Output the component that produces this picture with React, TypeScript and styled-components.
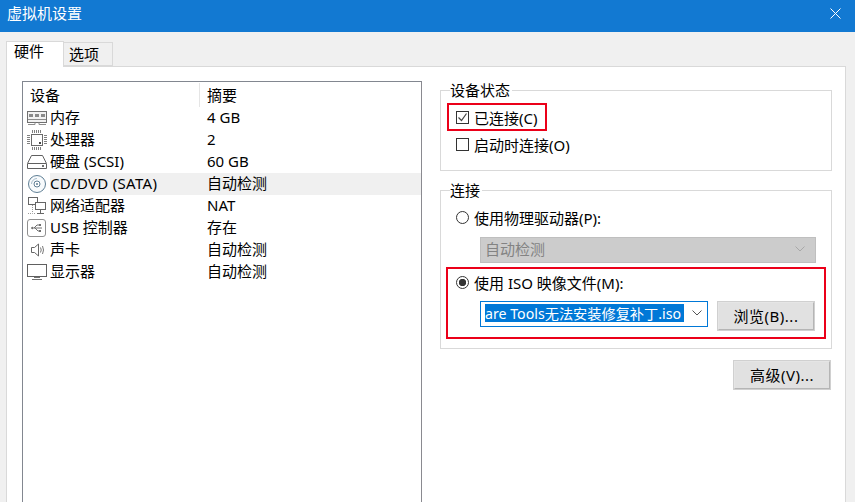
import React from 'react';
import styled, {createGlobalStyle} from "styled-components";

const GlobalStyle = createGlobalStyle`
  html, body {
    margin: 0;
    padding: 0;
    background: #f0f0f0;
  }
  body {
    font-family: "Noto Sans", "Noto Sans CJK SC", sans-serif;
    font-size: 15px;
    color: #000;
  }
`

const MemoryIcon = () => (
    <svg width="20" height="16" viewBox="0 0 20 16">
        <rect x="0.5" y="1.5" width="19" height="11" fill="#f2f2f2" stroke="#707070"/>
        <rect x="2" y="4" width="4" height="3" fill="#8a8a8a"/>
        <rect x="8" y="4" width="4" height="3" fill="#8a8a8a"/>
        <rect x="14" y="4" width="4" height="3" fill="#8a8a8a"/>
        <path d="M1 9.5H19M1 14.5H8V12.5M12 12.5V14.5H19" fill="none" stroke="#8c8c8c"/>
    </svg>
);

const CpuIcon = () => (
    <svg width="20" height="20" viewBox="0 0 20 20">
        <rect x="4.5" y="4.5" width="11" height="11" fill="#fff" stroke="#6a6a6a"/>
        <rect x="12" y="12" width="2" height="2" fill="#444"/>
        <path d="M5.5 0V3M7.5 0V3M9.5 0V3M11.5 0V3M13.5 0V3M5.5 17V20M7.5 17V20M9.5 17V20M11.5 17V20M13.5 17V20M0 5.5H3M0 7.5H3M0 9.5H3M0 11.5H3M0 13.5H3M17 5.5H20M17 7.5H20M17 9.5H20M17 11.5H20M17 13.5H20" stroke="#808080" strokeWidth="1"/>
    </svg>
);

const DiskIcon = () => (
    <svg width="20" height="16" viewBox="0 0 20 16">
        <path d="M4.5 1.5H15.5L19.5 9.5V14.5H0.5V9.5Z" fill="#fff" stroke="#606060"/>
        <path d="M1 9.5H19" stroke="#606060"/>
        <rect x="15" y="11" width="2" height="2" fill="#707070"/>
    </svg>
);

const DiscIcon = () => (
    <svg width="20" height="20" viewBox="0 0 20 20">
        <circle cx="10" cy="10" r="8.5" fill="#f7fafc" stroke="#5f7f95"/>
        <circle cx="10" cy="10" r="3" fill="#fff" stroke="#5f7f95"/>
        <circle cx="10" cy="10" r="1" fill="#5f7f95"/>
        <path d="M4.5 10A5.5 5.5 0 0 1 10 4.5" fill="none" stroke="#a8bdcb"/>
    </svg>
);

const NetworkIcon = () => (
    <svg width="20" height="20" viewBox="0 0 20 20">
        <rect x="1.5" y="1.5" width="9" height="7" fill="#fff" stroke="#666"/>
        <rect x="8.5" y="6.5" width="10" height="7" fill="#fff" stroke="#666"/>
        <path d="M13.5 14V17M10 17.5H17" stroke="#666"/>
        <path d="M5.5 9V17.5H9" fill="none" stroke="#999" strokeDasharray="1 1"/>
        <path d="M1 17.5H5" stroke="#999" strokeDasharray="1 1"/>
    </svg>
);

const UsbIcon = () => (
    <svg width="20" height="20" viewBox="0 0 20 20">
        <rect x="0.5" y="1.5" width="18" height="17" rx="2.5" fill="#fff" stroke="#909090"/>
        <path d="M4 10H15M7 10L10 7H12M8 10L11 13H12" fill="none" stroke="#707070"/>
        <path d="M4 10L6 8.5V11.5Z" fill="#707070"/>
        <rect x="12" y="6" width="2" height="2" fill="#707070"/>
        <rect x="12" y="12" width="2" height="2" fill="#707070"/>
    </svg>
);

const SoundIcon = () => (
    <svg width="20" height="16" viewBox="0 0 20 16">
        <path d="M4.5 5.5H7.5L11.5 2V14L7.5 10.5H4.5Z" fill="#fff" stroke="#666"/>
        <path d="M13.5 5.5Q15 8 13.5 10.5M15.5 4Q17.5 8 15.5 12" fill="none" stroke="#777"/>
    </svg>
);

const DisplayIcon = () => (
    <svg width="20" height="18" viewBox="0 0 20 18">
        <rect x="0.5" y="1.5" width="19" height="12" fill="#fff" stroke="#606060"/>
        <path d="M7 14.5H13M5 16.5H15" stroke="#707070"/>
    </svg>
);

const devices = [
    {name: "内存", summary: "4 GB", icon: <MemoryIcon/>},
    {name: "处理器", summary: "2", icon: <CpuIcon/>},
    {name: "硬盘 (SCSI)", summary: "60 GB", icon: <DiskIcon/>},
    {name: "CD/DVD (SATA)", summary: "自动检测", icon: <DiscIcon/>, selected: true},
    {name: "网络适配器", summary: "NAT", icon: <NetworkIcon/>},
    {name: "USB 控制器", summary: "存在", icon: <UsbIcon/>},
    {name: "声卡", summary: "自动检测", icon: <SoundIcon/>},
    {name: "显示器", summary: "自动检测", icon: <DisplayIcon/>},
];

const Chevron = ({color}: { color: string }) => (
    <svg width="10" height="6" viewBox="0 0 10 6">
        <path d="M0.5 0.5L5 5L9.5 0.5" fill="none" stroke={color}/>
    </svg>
);

export default function App() {
    return (
        <Window>
            <GlobalStyle/>
            <TitleBar>
                <Title>虚拟机设置</Title>
                <svg width="11" height="11" viewBox="0 0 11 11">
                    <path d="M0.5 0.5L10.5 10.5M10.5 0.5L0.5 10.5" stroke="#fff" strokeWidth="1"/>
                </svg>
            </TitleBar>
            <TabStrip>
                <Tab $active>硬件</Tab>
                <Tab>选项</Tab>
            </TabStrip>
            <Panel>
                <DeviceList>
                    <HeaderRow>
                        <HeaderName>设备</HeaderName>
                        <HeaderSummary>摘要</HeaderSummary>
                    </HeaderRow>
                    {devices.map(d => (
                        <DeviceRow key={d.name}>
                            <IconSlot>{d.icon}</IconSlot>
                            <DeviceName $selected={d.selected}>{d.name}</DeviceName>
                            <DeviceSummary $selected={d.selected}>{d.summary}</DeviceSummary>
                        </DeviceRow>
                    ))}
                </DeviceList>
                <Side>
                    <StatusGroup>
                        <Legend>设备状态</Legend>
                        <HighlightConnected>
                            <CheckBox $checked>
                                <svg width="11" height="11" viewBox="0 0 11 11">
                                    <path d="M1.5 5.5L4.5 8.5L9.5 1.5" fill="none" stroke="#444" strokeWidth="1.2"/>
                                </svg>
                            </CheckBox>
                            <span>已连接(C)</span>
                        </HighlightConnected>
                        <StartupRow>
                            <CheckBox/>
                            <span>启动时连接(O)</span>
                        </StartupRow>
                    </StatusGroup>
                    <ConnectGroup>
                        <Legend>连接</Legend>
                        <PhysicalRow>
                            <Radio/>
                            <span>使用物理驱动器(P):</span>
                        </PhysicalRow>
                        <DisabledSelect>
                            <span>自动检测</span>
                            <Chevron color="#a8a8a8"/>
                        </DisabledSelect>
                        <HighlightIso>
                            <IsoRow>
                                <Radio $checked/>
                                <span>使用 ISO 映像文件(M):</span>
                            </IsoRow>
                            <IsoControls>
                                <IsoCombo>
                                    <Selection>are Tools无法安装修复补丁.iso</Selection>
                                    <Chevron color="#555"/>
                                </IsoCombo>
                                <BrowseButton>浏览(B)...</BrowseButton>
                            </IsoControls>
                        </HighlightIso>
                    </ConnectGroup>
                    <ButtonRow>
                        <PlainButton>高级(V)...</PlainButton>
                    </ButtonRow>
                </Side>
            </Panel>
        </Window>
    );
}

const Window = styled.div`
  width: 855px;
  height: 502px;
  overflow: hidden;
  display: flex;
  flex-direction: column;
  background: #f0f0f0;
`

const TitleBar = styled.div`
  height: 32px;
  box-sizing: border-box;
  flex: none;
  display: flex;
  align-items: center;
  justify-content: space-between;
  padding: 0 14px 6px 7px;
  background: #1279d2;
  color: #fff;
`

const Title = styled.div`
  line-height: 26px;
  height: 26px;
`

const TabStrip = styled.div`
  flex: none;
  height: 34px;
  padding-left: 6px;
  display: flex;
  align-items: flex-end;
  position: relative;
  z-index: 1;
`

const Tab = styled.div<{ $active?: boolean }>`
  box-sizing: border-box;
  height: ${p => p.$active ? 26 : 24}px;
  width: ${p => p.$active ? 58 : 50}px;
  margin-left: ${p => p.$active ? 0 : -1}px;
  margin-bottom: ${p => p.$active ? -1 : 0}px;
  padding-left: ${p => p.$active ? 7 : 5}px;
  line-height: ${p => p.$active ? 19 : 22}px;
  background: ${p => p.$active ? "#fff" : "#f0f0f0"};
  border: 1px solid #d9d9d9;
  border-bottom: ${p => p.$active ? "none" : "1px solid #d9d9d9"};
`

const Panel = styled.div`
  flex: 1;
  box-sizing: border-box;
  width: 840px;
  margin-left: 6px;
  padding: 14px 13px 0 15px;
  display: flex;
  align-items: flex-start;
  background: #fff;
  border: 1px solid #d9d9d9;
  border-bottom: none;
`

const DeviceList = styled.div`
  box-sizing: border-box;
  width: 400px;
  height: 460px;
  flex: none;
  border: 1px solid #828790;
  border-right-color: #8a8a90;
`

const HeaderRow = styled.div`
  height: 24px;
  margin-top: 1px;
  display: flex;
  align-items: center;
`

const HeaderName = styled.div`
  width: 177px;
  box-sizing: border-box;
  padding-left: 7px;
  height: 24px;
  line-height: 24px;
  border-right: 1px solid #e5e5e5;
`

const HeaderSummary = styled.div`
  padding-left: 7px;
  line-height: 24px;
  height: 24px;
`

const DeviceRow = styled.div`
  height: 22px;
  display: flex;
  align-items: center;
  white-space: nowrap;
`

const IconSlot = styled.div`
  width: 27px;
  padding-left: 4px;
  box-sizing: border-box;
  flex: none;
  height: 22px;
  display: flex;
  align-items: center;
`

const DeviceName = styled.div<{ $selected?: boolean }>`
  width: 151px;
  height: 22px;
  line-height: 20px;
  box-sizing: border-box;
  letter-spacing: ${p => p.$selected ? 0.3 : 0}px;
  background: ${p => p.$selected ? "#f0f0f0" : "transparent"};
`

const DeviceSummary = styled.div<{ $selected?: boolean }>`
  flex: 1;
  height: 22px;
  line-height: 20px;
  padding-left: 6px;
  background: ${p => p.$selected ? "#f0f0f0" : "transparent"};
`

const Side = styled.div`
  width: 392px;
  margin-left: 18px;
  padding-top: 9px;
  flex: none;
`

const Group = styled.div`
  position: relative;
  box-sizing: border-box;
  border: 1px solid #d9d9d9;
`

const StatusGroup = styled(Group)`
  height: 81px;
  padding: 12px 0 0 6px;
`

const ConnectGroup = styled(Group)`
  height: 159px;
  margin-top: 19px;
  padding: 14px 0 0 5px;
`

const Legend = styled.div`
  position: absolute;
  top: -10px;
  left: 9px;
  padding: 0 2px 0 0;
  line-height: 18px;
  background: #fff;
`

const OptionRow = styled.div`
  display: flex;
  align-items: center;
  gap: 5px;
  white-space: nowrap;
`

const HighlightConnected = styled(OptionRow)`
  box-sizing: border-box;
  width: 100px;
  height: 28px;
  padding-left: 7px;
  border: 2px solid #eb0019;
`

const StartupRow = styled(OptionRow)`
  height: 26px;
  padding-left: 9px;
`

const PhysicalRow = styled(OptionRow)`
  height: 24px;
  padding-left: 10px;
`

const CheckBox = styled.span<{ $checked?: boolean }>`
  box-sizing: border-box;
  width: 13px;
  height: 13px;
  flex: none;
  display: flex;
  align-items: center;
  justify-content: center;
  border: 1px solid #333;
  background: #fff;
`

const Radio = styled.span<{ $checked?: boolean }>`
  box-sizing: border-box;
  width: 13px;
  height: 13px;
  flex: none;
  border-radius: 50%;
  border: 1px solid #333;
  background: ${p => p.$checked ? "radial-gradient(circle, #333 0, #333 3.4px, #fff 4px)" : "#fff"};
`

const DisabledSelect = styled.div`
  box-sizing: border-box;
  width: 336px;
  height: 26px;
  margin: 8px 0 0 34px;
  padding: 0 10px 3px 4px;
  display: flex;
  align-items: center;
  justify-content: space-between;
  background: #cccccc;
  border: 1px solid #bfbfbf;
  color: #838383;
`

const HighlightIso = styled.div`
  box-sizing: border-box;
  width: 380px;
  height: 72px;
  margin-top: 4px;
  border: 2px solid #eb0019;
`

const IsoRow = styled(OptionRow)`
  height: 26px;
  padding-left: 8px;
`

const IsoControls = styled.div`
  display: flex;
  align-items: flex-start;
  margin: 6px 0 0 32px;
  gap: 9px;
`

const IsoCombo = styled.div`
  box-sizing: border-box;
  width: 228px;
  height: 26px;
  padding: 2px 5px 4px 4px;
  display: flex;
  align-items: center;
  justify-content: space-between;
  background: #fff;
  border: 1px solid #0078d7;
`

const Selection = styled.div`
  width: 199px;
  height: 18px;
  line-height: 19px;
  font-size: 14.2px;
  overflow: hidden;
  white-space: nowrap;
  background: #0078d7;
  color: #fff;
`

const PlainButton = styled.div`
  box-sizing: border-box;
  width: 98px;
  height: 30px;
  line-height: 26px;
  text-align: center;
  white-space: nowrap;
  letter-spacing: 0.5px;
  background: #e1e1e1;
  border: 2px solid #adadad;
  border-color: #e5e5e5 #b5b5b5 #b5b5b5 #e5e5e5;
  outline: 1px solid #d0d0d0;
  outline-offset: -1px;
`

const BrowseButton = styled(PlainButton)``

const ButtonRow = styled.div`
  display: flex;
  justify-content: flex-end;
  margin: 11px 1px 0 0;
`
